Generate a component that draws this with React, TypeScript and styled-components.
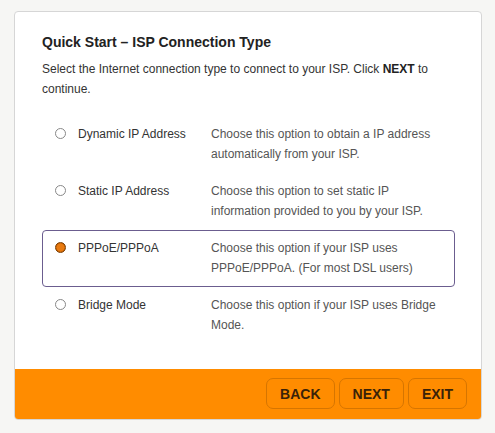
import React, { useState } from 'react';
import styled, { createGlobalStyle } from 'styled-components';

const GlobalStyle = createGlobalStyle`
  html, body {
    margin: 0;
    padding: 0;
    background: #f6f6f4;
    font-family: "Liberation Sans", Arial, sans-serif;
  }
`;

interface Option {
  id: string;
  label: string;
  description: string;
}

const options: Option[] = [
  { id: 'dynamic', label: 'Dynamic IP Address', description: 'Choose this option to obtain a IP address automatically from your ISP.' },
  { id: 'static', label: 'Static IP Address', description: 'Choose this option to set static IP information provided to you by your ISP.' },
  { id: 'pppoe', label: 'PPPoE/PPPoA', description: 'Choose this option if your ISP uses PPPoE/PPPoA. (For most DSL users)' },
  { id: 'bridge', label: 'Bridge Mode', description: 'Choose this option if your ISP uses Bridge Mode.' }
];

const App: React.FC = () => {
  const [selected, setSelected] = useState('pppoe');

  return (
    <Page>
      <GlobalStyle />
      <Card>
        <Body>
          <Title>Quick Start – ISP Connection Type</Title>
          <Intro>
            Select the Internet connection type to connect to your ISP. Click <b>NEXT</b> to continue.
          </Intro>
          <OptionList>
            {options.map((opt) => (
              <OptionRow key={opt.id} $active={selected === opt.id} onClick={() => setSelected(opt.id)}>
                <Radio $checked={selected === opt.id} />
                <Label>{opt.label}</Label>
                <Desc>{opt.description}</Desc>
              </OptionRow>
            ))}
          </OptionList>
        </Body>
        <Footer>
          <Button>BACK</Button>
          <Button>NEXT</Button>
          <Button>EXIT</Button>
        </Footer>
      </Card>
    </Page>
  );
};

const Page = styled.div`
  padding: 11px 13px 13px 14px;
`;

const Card = styled.div`
  width: 468px;
  height: 409px;
  box-sizing: border-box;
  background: #fff;
  border: 1px solid #d6d6d6;
  border-radius: 4px;
  display: flex;
  flex-direction: column;
  overflow: hidden;
`;

const Body = styled.div`
  flex: 1;
  padding: 21px 26px 0 27px;
`;

const Title = styled.h2`
  margin: 0;
  font-size: 14px;
  font-weight: 700;
  color: #222;
  line-height: 18px;
`;

const Intro = styled.p`
  margin: 8px 0 0;
  font-size: 12px;
  line-height: 20px;
  color: #333;

  b {
    color: #222;
  }
`;

const OptionList = styled.div`
  margin-top: 17px;
  display: flex;
  flex-direction: column;
`;

const OptionRow = styled.div<{ $active: boolean }>`
  height: 57px;
  box-sizing: border-box;
  display: grid;
  grid-template-columns: 23px 133px 1fr;
  align-items: start;
  padding: 7px 0 0 12px;
  border: 1px solid ${(p) => (p.$active ? '#6b5d8f' : 'transparent')};
  border-radius: 4px;
  cursor: pointer;
`;

const Radio = styled.span<{ $checked: boolean }>`
  width: 11px;
  height: 11px;
  margin-top: 4px;
  box-sizing: border-box;
  border-radius: 50%;
  border: 1px solid ${(p) => (p.$checked ? '#7a3c00' : '#888')};
  background: ${(p) => (p.$checked ? 'radial-gradient(circle, #e87a10 55%, #c86000 70%)' : '#fff')};
`;

const Label = styled.span`
  font-size: 12px;
  line-height: 20px;
  color: #333;
`;

const Desc = styled.span`
  font-size: 12px;
  line-height: 20px;
  color: #555;
  padding-right: 6px;
`;

const Footer = styled.div`
  height: 50px;
  background: #ff8c00;
  display: flex;
  justify-content: flex-end;
  align-items: center;
  gap: 4px;
  padding: 0 14px 1px 0;
  box-sizing: border-box;
`;

const Button = styled.button`
  height: 31px;
  margin: 0;
  padding: 0 13px;
  background: #ff8c00;
  border: 1px solid #d67500;
  border-radius: 7px;
  font-family: "Liberation Sans", Arial, sans-serif;
  font-size: 14px;
  font-weight: 700;
  color: #3a2208;
  cursor: pointer;
`;

export default App;
